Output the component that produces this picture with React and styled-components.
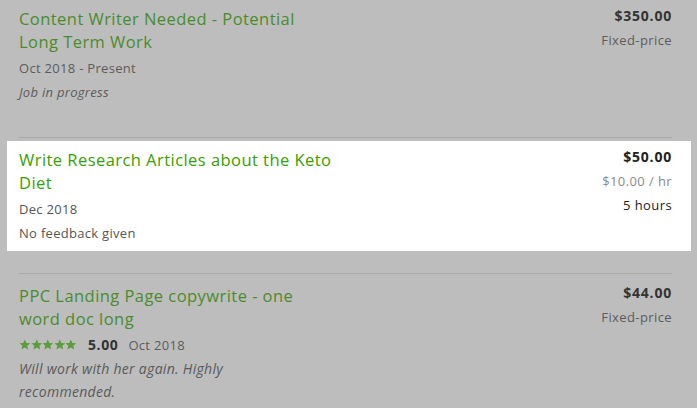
import React from "react";
import styled, { createGlobalStyle } from "styled-components";

const GlobalStyle = createGlobalStyle`
  html, body {
    margin: 0;
    padding: 0;
    background: #bdbdbd;
  }
  body {
    font-family: "Open Sans", "Liberation Sans", sans-serif;
  }
`;

const jobs = [
  {
    title: "Content Writer Needed - Potential Long Term Work",
    meta: [{ text: "Oct 2018 - Present" }, { text: "Job in progress", italic: true }],
    right: [{ text: "$350.00", strong: true }, { text: "Fixed-price" }],
    extraBottom: 5,
  },
  {
    title: "Write Research Articles about the Keto Diet",
    active: true,
    meta: [{ text: "Dec 2018" }, { text: "No feedback given" }],
    right: [
      { text: "$50.00", strong: true },
      { text: "$10.00 / hr", muted: true },
      { text: "5 hours" },
    ],
  },
  {
    title: "PPC Landing Page copywrite - one word doc long",
    rating: "5.00",
    date: "Oct 2018",
    comment: "Will work with her again. Highly recommended.",
    right: [{ text: "$44.00", strong: true }, { text: "Fixed-price" }],
  },
];

const List = styled.div`
  padding: 0 25px 0 19px;
`;

const Item = styled.div`
  display: flex;
  justify-content: space-between;
  margin: 0 -19px 0 -12px;
  padding: 7px 19px ${(p) => 6 + (p.$extraBottom || 0)}px 12px;
  background: ${(p) => (p.$active ? "#ffffff" : "transparent")};
`;

const Divider = styled.hr`
  border: 0;
  border-top: 1px solid #a9a9a9;
  margin: ${(p) => p.$top}px 0 ${(p) => p.$bottom}px;
`;

const Left = styled.div`
  width: 316px;
`;

const Title = styled.a`
  display: block;
  font-size: 16.5px;
  font-weight: 500;
  letter-spacing: 0.45px;
  line-height: 23px;
  color: ${(p) => (p.$active ? "#37a000" : "#4a8c2c")};
  text-decoration: none;
  cursor: pointer;
`;

const Meta = styled.div`
  margin-top: 3px;
`;

const MetaLine = styled.div`
  font-size: 13px;
  letter-spacing: 0.3px;
  line-height: 24px;
  font-style: ${(p) => (p.$italic ? "italic" : "normal")};
  color: ${(p) => (p.$active ? "#555" : "#5c5c5c")};
`;

const Comment = styled.p`
  margin: 0;
  max-width: 280px;
  font-size: 14px;
  letter-spacing: 0.3px;
  line-height: 23px;
  font-style: italic;
  color: #5a5a5a;
`;

const RatingRow = styled.div`
  display: flex;
  align-items: center;
  font-size: 13px;
  letter-spacing: 0.3px;
  line-height: 24px;
  color: #5c5c5c;
`;

const Stars = styled.span`
  display: inline-flex;
  margin-right: 11px;
`;

const Score = styled.span`
  font-size: 14px;
  font-weight: 700;
  letter-spacing: 0.6px;
  color: #333;
  margin-right: 10px;
`;

const Right = styled.div`
  margin-top: -3px;
  text-align: right;
`;

const RightLine = styled.div`
  font-size: ${(p) => (p.$strong ? 14 : 13)}px;
  letter-spacing: ${(p) => (p.$strong ? 0.8 : 0.4)}px;
  line-height: 24px;
  font-weight: ${(p) => (p.$strong ? 700 : 400)};
  color: ${(p) =>
    p.$strong
      ? p.$active
        ? "#222"
        : "#333"
      : p.$muted
      ? "#8a8a8a"
      : p.$active
      ? "#222"
      : "#5c5c5c"};
`;

const Star = () => (
  <svg width="11.6" height="11.6" viewBox="0 0 24 24">
    <path
      fill="#5a9d3a"
      d="M12 1l3.3 7.2 7.7.7-5.8 5.1 1.8 7.7L12 17.6l-7 4.1 1.8-7.7L1 8.9l7.7-.7z"
    />
  </svg>
);

const JobRow = ({ job }) => (
  <Item $active={job.active} $extraBottom={job.extraBottom}>
    <Left>
      <Title $active={job.active}>{job.title}</Title>
      <Meta>
        {job.meta &&
          job.meta.map((m) => (
            <MetaLine key={m.text} $italic={m.italic} $active={job.active}>
              {m.text}
            </MetaLine>
          ))}
        {job.rating && (
          <>
            <RatingRow>
              <Stars>
                {[0, 1, 2, 3, 4].map((i) => (
                  <Star key={i} />
                ))}
              </Stars>
              <Score>{job.rating}</Score>
              <span>{job.date}</span>
            </RatingRow>
            <Comment>{job.comment}</Comment>
          </>
        )}
      </Meta>
    </Left>
    <Right>
      {job.right.map((r) => (
        <RightLine
          key={r.text}
          $strong={r.strong}
          $muted={r.muted}
          $active={job.active}
        >
          {r.text}
        </RightLine>
      ))}
    </Right>
  </Item>
);

export default function App() {
  return (
    <>
      <GlobalStyle />
      <List>
        <JobRow job={jobs[0]} />
        <Divider $top={22} $bottom={3} />
        <JobRow job={jobs[1]} />
        <Divider $top={22} $bottom={3} />
        <JobRow job={jobs[2]} />
      </List>
    </>
  );
}
